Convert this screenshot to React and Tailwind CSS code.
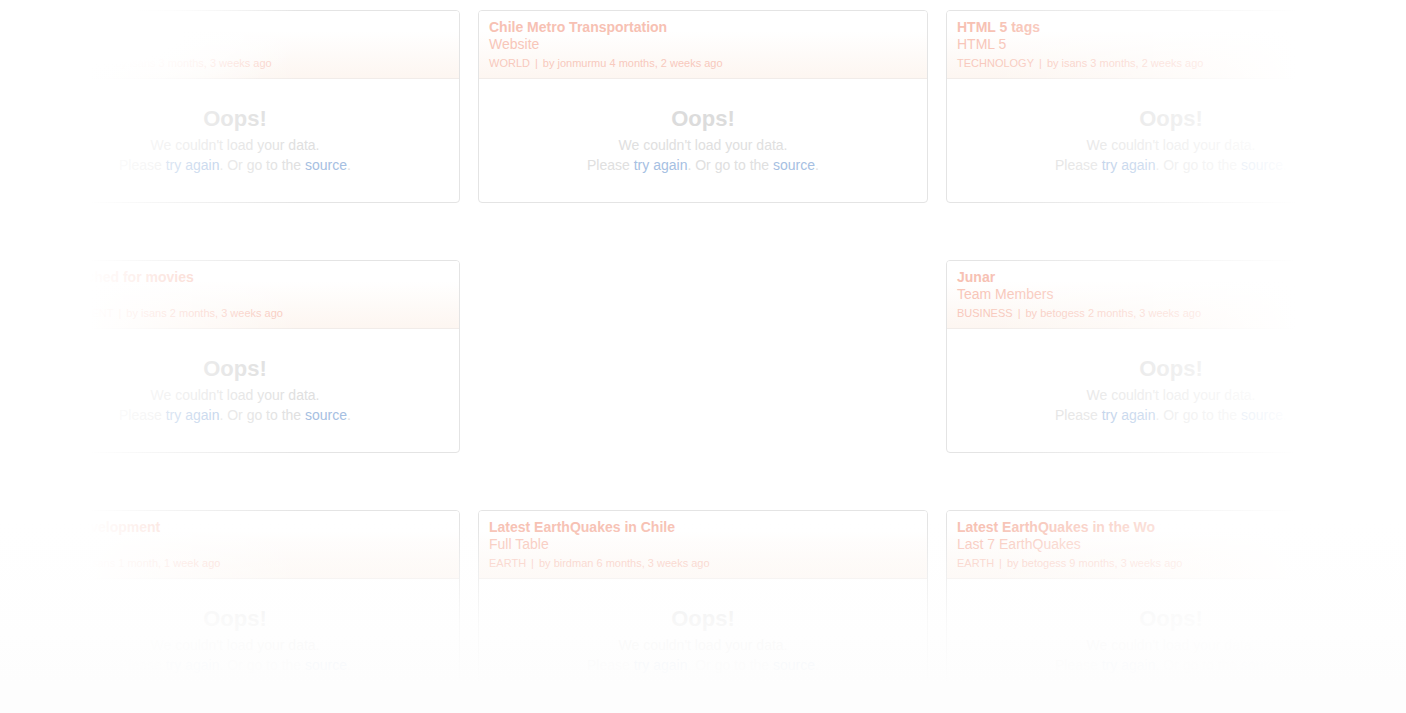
import React from 'react';

const cards = [
  { title: 'Santiago Air Quality', subtitle: 'Daily Index', tag: 'ENVIRONMENT', by: 'isans', when: '3 months, 3 weeks ago' },
  { title: 'Chile Metro Transportation', subtitle: 'Website', tag: 'WORLD', by: 'jonmurmu', when: '4 months, 2 weeks ago' },
  { title: 'HTML 5 tags', subtitle: 'HTML 5', tag: 'TECHNOLOGY', by: 'isans', when: '3 months, 2 weeks ago' },
  { title: 'Most searched for movies', subtitle: 'Top 10', tag: 'ENTERTAINMENT', by: 'isans', when: '2 months, 3 weeks ago' },
  null,
  { title: 'Junar', subtitle: 'Team Members', tag: 'BUSINESS', by: 'betogess', when: '2 months, 3 weeks ago' },
  { title: 'Human Development', subtitle: 'Index', tag: 'WORLD', by: 'isans', when: '1 month, 1 week ago' },
  { title: 'Latest EarthQuakes in Chile', subtitle: 'Full Table', tag: 'EARTH', by: 'birdman', when: '6 months, 3 weeks ago' },
  { title: 'Latest EarthQuakes in the Wo', subtitle: 'Last 7 EarthQuakes', tag: 'EARTH', by: 'betogess', when: '9 months, 3 weeks ago' },
];

const Card = ({ card }) => {
  if (!card) return <div className="h-[193px]" />;
  return (
    <div className="h-[193px] border border-[#e4e4e4] rounded-[4px] bg-white overflow-hidden">
      <div className="h-[68px] px-[10px] pt-[8px] border-b border-[#f1ece9] bg-[linear-gradient(to_bottom,#ffffff_30%,#fdf6f1)]">
        <div className="text-[14px] leading-[17px] font-bold text-[#f7c1b3]">{card.title}</div>
        <div className="text-[14px] leading-[17px] text-[#f8c6b9]">{card.subtitle}</div>
        <div className="mt-[3px] text-[11px] leading-[14px] text-[#f8c9bd]">
          {card.tag}
          <span className="mx-[5px]">|</span>
          by {card.by} {card.when}
        </div>
      </div>
      <div className="pt-[27px] text-center">
        <div className="text-[22px] leading-[26px] font-bold text-[#dcdcdc]">Oops!</div>
        <div className="mt-[3px] text-[14px] leading-[20px] text-[#e0e0e0]">We couldn't load your data.</div>
        <div className="text-[14px] leading-[20px] text-[#e0e0e0]">
          Please <span className="text-[#a6c0e2]">try again</span>. Or go to the{' '}
          <span className="text-[#a6c0e2]">source</span>.
        </div>
      </div>
    </div>
  );
};

const App = () => {
  return (
    <div
      className="relative w-full h-[713px] overflow-hidden bg-white"
      style={{ fontFamily: '"Liberation Sans", Arial, sans-serif' }}
    >
      <div className="grid grid-cols-[450px_450px_450px] gap-x-[18px] gap-y-[57px] pt-[10px] pl-[10px]">
        {cards.map((card, i) => (
          <Card key={i} card={card} />
        ))}
      </div>

      {/* fade overlays */}
      <div className="absolute inset-0 pointer-events-none bg-[linear-gradient(to_right,rgba(255,255,255,1)_90px,rgba(255,255,255,0.6)_170px,rgba(255,255,255,0)_300px)]" />
      <div className="absolute inset-0 pointer-events-none bg-[radial-gradient(ellipse_220px_70px_at_90px_35px,rgba(255,255,255,1)_40%,rgba(255,255,255,0)_100%)]" />
      <div className="absolute inset-0 pointer-events-none bg-[linear-gradient(to_left,rgba(255,255,255,1)_110px,rgba(255,255,255,0.6)_220px,rgba(255,255,255,0)_420px)]" />
      <div className="absolute inset-0 pointer-events-none bg-[linear-gradient(to_top,rgba(253,253,253,1)_30px,rgba(254,254,254,0.8)_90px,rgba(255,255,255,0)_190px)]" />
    </div>
  );
};

export default App;
